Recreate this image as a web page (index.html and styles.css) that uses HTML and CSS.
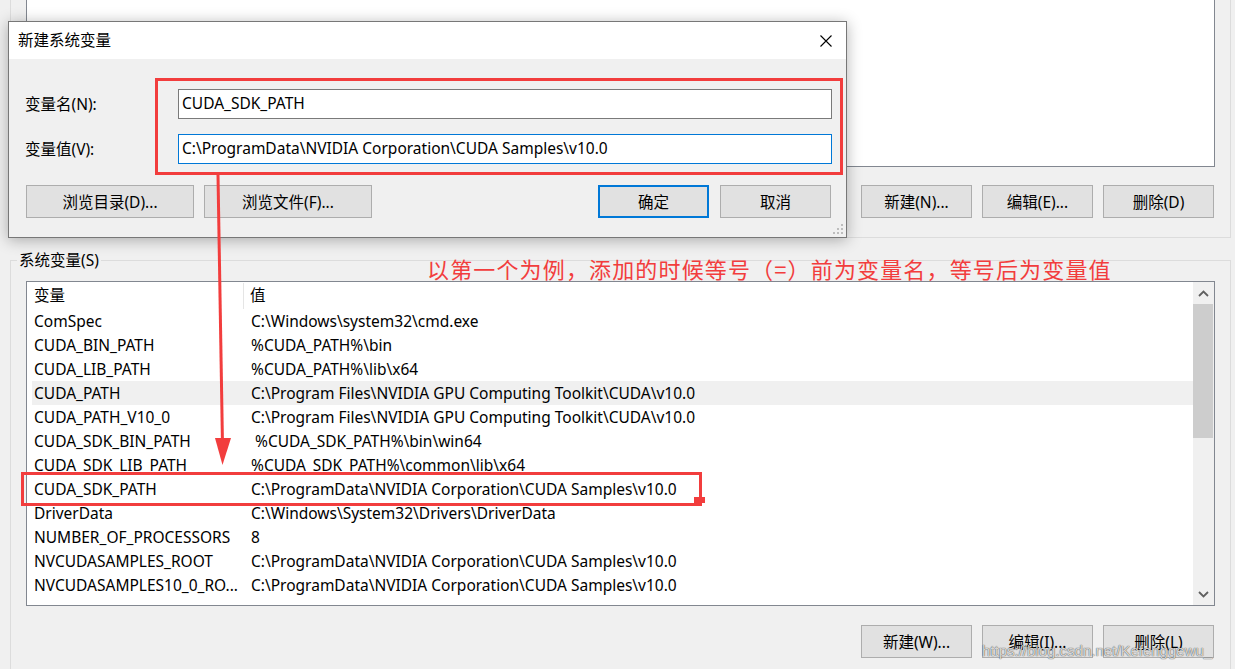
FILE: index.html
```html
<!DOCTYPE html>
<html lang="zh-CN">
<head>
<meta charset="utf-8">
<title>新建系统变量</title>
<link rel="stylesheet" href="styles.css">
</head>
<body>
<div class="screen">
  <section class="group group-user">
    <div class="list list-user"></div>
    <div class="btn-row">
      <button class="btn">新建(N)...</button>
      <button class="btn">编辑(E)...</button>
      <button class="btn">删除(D)</button>
    </div>
  </section>

  <section class="group group-sys">
    <div class="group-title">系统变量(S)</div>
    <div class="list list-sys">
      <div class="list-body">
        <div class="list-head">
          <span class="head-name">变量</span>
          <span class="head-val">值</span>
        </div>
        <div class="row"><span class="col-name">ComSpec</span><span class="col-val">C:\Windows\system32\cmd.exe</span></div>
        <div class="row"><span class="col-name">CUDA_BIN_PATH</span><span class="col-val">%CUDA_PATH%\bin</span></div>
        <div class="row"><span class="col-name">CUDA_LIB_PATH</span><span class="col-val">%CUDA_PATH%\lib\x64</span></div>
        <div class="row row-hover"><span class="col-name">CUDA_PATH</span><span class="col-val">C:\Program Files\NVIDIA GPU Computing Toolkit\CUDA\v10.0</span></div>
        <div class="row"><span class="col-name">CUDA_PATH_V10_0</span><span class="col-val">C:\Program Files\NVIDIA GPU Computing Toolkit\CUDA\v10.0</span></div>
        <div class="row"><span class="col-name">CUDA_SDK_BIN_PATH</span><span class="col-val col-indent">%CUDA_SDK_PATH%\bin\win64</span></div>
        <div class="row"><span class="col-name">CUDA_SDK_LIB_PATH</span><span class="col-val">%CUDA_SDK_PATH%\common\lib\x64</span></div>
        <div class="row"><span class="col-name">CUDA_SDK_PATH</span><span class="col-val">C:\ProgramData\NVIDIA Corporation\CUDA Samples\v10.0</span></div>
        <div class="row"><span class="col-name">DriverData</span><span class="col-val">C:\Windows\System32\Drivers\DriverData</span></div>
        <div class="row"><span class="col-name">NUMBER_OF_PROCESSORS</span><span class="col-val">8</span></div>
        <div class="row"><span class="col-name">NVCUDASAMPLES_ROOT</span><span class="col-val">C:\ProgramData\NVIDIA Corporation\CUDA Samples\v10.0</span></div>
        <div class="row"><span class="col-name">NVCUDASAMPLES10_0_RO...</span><span class="col-val">C:\ProgramData\NVIDIA Corporation\CUDA Samples\v10.0</span></div>
      </div>
      <div class="scrollbar">
        <div class="sb-arrow">
          <svg width="11" height="7" viewBox="0 0 11 7"><path d="M1 6 L5.5 1.5 L10 6" fill="none" stroke="#606060" stroke-width="1.8"/></svg>
        </div>
        <div class="sb-track"><div class="sb-thumb"></div></div>
        <div class="sb-arrow">
          <svg width="11" height="7" viewBox="0 0 11 7"><path d="M1 1 L5.5 5.5 L10 1" fill="none" stroke="#606060" stroke-width="1.8"/></svg>
        </div>
      </div>
    </div>
    <div class="btn-row">
      <button class="btn">新建(W)...</button>
      <button class="btn">编辑(I)...</button>
      <button class="btn">删除(L)</button>
    </div>
  </section>

  <div class="dialog">
    <div class="title-bar">
      <span class="title">新建系统变量</span>
      <span class="close">
        <svg width="12" height="12" viewBox="0 0 12 12"><path d="M0.5 0.5 L11.5 11.5 M11.5 0.5 L0.5 11.5" stroke="#000" stroke-width="1.1" fill="none"/></svg>
      </span>
    </div>
    <div class="dialog-body">
      <div class="form">
        <label class="label">变量名(N):</label>
        <div class="input">CUDA_SDK_PATH</div>
        <label class="label">变量值(V):</label>
        <div class="input input-focus">C:\ProgramData\NVIDIA Corporation\CUDA Samples\v10.0</div>
      </div>
      <div class="dlg-buttons">
        <div class="dlg-left">
          <button class="btn btn-wide">浏览目录(D)...</button>
          <button class="btn btn-wide">浏览文件(F)...</button>
        </div>
        <div class="dlg-right">
          <button class="btn btn-default">确定</button>
          <button class="btn">取消</button>
        </div>
      </div>
    </div>
    <svg class="grip" width="12" height="12" viewBox="0 0 12 12">
      <rect x="9" y="1" width="2" height="2" fill="#bdbdbd"/>
      <rect x="5" y="5" width="2" height="2" fill="#bdbdbd"/>
      <rect x="9" y="5" width="2" height="2" fill="#bdbdbd"/>
      <rect x="1" y="9" width="2" height="2" fill="#bdbdbd"/>
      <rect x="5" y="9" width="2" height="2" fill="#bdbdbd"/>
      <rect x="9" y="9" width="2" height="2" fill="#bdbdbd"/>
    </svg>
  </div>

  <div class="mark mark-inputs"></div>
  <div class="mark mark-row"></div>
  <div class="mark-tab"></div>
  <svg class="arrow" width="1235" height="669" viewBox="0 0 1235 669">
    <line x1="218" y1="175" x2="222.5" y2="445" stroke="#f23d3d" stroke-width="3"/>
    <polygon points="215,438 231,438 222.5,465" fill="#f23d3d"/>
  </svg>
  <p class="note">以第一个为例，添加的时候等号（=）前为变量名，等号后为变量值</p>
  <div class="watermark">https://blog.csdn.net/Kefenggewu_</div>
</div>
</body>
</html>
```

FILE: styles.css
```css
* { box-sizing: border-box; }

body {
  margin: 0;
  background: #f0f0f0;
  font-family: "Noto Sans", "Noto Sans CJK SC", sans-serif;
  font-size: 15.5px;
  color: #000;
  overflow: hidden;
}

.screen {
  position: relative;
  width: 1235px;
  height: 669px;
  overflow: hidden;
}

/* ---------- group boxes ---------- */
.group {
  margin: 0 4px 0 10px;
  border: 1px solid #dcdcdc;
  padding: 0 15px;
}

.group-user {
  border-top: 0;
  height: 238px;
}

.group-sys {
  margin-top: 22px;
  border-bottom: 0;
  height: 420px;
}

.group-title {
  width: fit-content;
  margin: -11px 0 0 -9px;
  padding: 0 2px;
  line-height: 20px;
  background: #f0f0f0;
}

.list {
  background: #fff;
  border: 1px solid #828790;
}

.list-user {
  height: 167px;
  border-top: 0;
}

.list-sys {
  margin-top: 11px;
  height: 325px;
  display: flex;
}

.list-body {
  flex: 1;
  padding-left: 5px;
  overflow: hidden;
}

.list-head {
  display: flex;
  height: 27px;
  padding-top: 1px;
}

.head-name {
  width: 212px;
  padding-left: 2px;
  border-right: 1px solid #e5e5e5;
  line-height: 25px;
}

.head-val {
  padding-left: 6px;
  line-height: 25px;
}

.row {
  display: flex;
  height: 24px;
  line-height: 24px;
  white-space: nowrap;
}

.row-hover { background: #f0f0f0; }

.col-name {
  width: 219px;
  padding-left: 2px;
  flex-shrink: 0;
}

.col-indent { padding-left: 4px; }

.scrollbar {
  width: 21px;
  background: #f0f0f0;
  display: flex;
  flex-direction: column;
}

.sb-arrow {
  height: 22px;
  display: flex;
  align-items: center;
  justify-content: center;
}

.sb-track {
  flex: 1;
  padding-right: 1px;
}

.sb-thumb {
  height: 134px;
  background: #cdcdcd;
}

/* ---------- buttons ---------- */
.btn-row {
  display: flex;
  justify-content: flex-end;
  gap: 10px;
  padding-right: 1px;
}

.group-user .btn-row { margin-top: 18px; }
.group-sys .btn-row { margin-top: 19px; }

.btn {
  width: 111px;
  height: 33px;
  margin: 0;
  padding: 0;
  background: #e1e1e1;
  border: 1px solid #adadad;
  font: inherit;
  color: #000;
  text-align: center;
  line-height: 30px;
}

.btn-wide { width: 168px; }

.btn-default { border: 2px solid #0078d7; }

/* ---------- dialog ---------- */
.dialog {
  position: absolute;
  left: 8px;
  top: 21px;
  width: 839px;
  height: 217px;
  border: 1px solid #777;
  background: #f0f0f0;
  box-shadow: 0 2px 14px rgba(0, 0, 0, 0.3);
}

.title-bar {
  height: 37px;
  background: #fff;
  display: flex;
  justify-content: space-between;
  align-items: center;
  padding-left: 9px;
}

.title { line-height: 37px; }

.close {
  width: 40px;
  height: 37px;
  display: flex;
  align-items: center;
  justify-content: center;
}

.dialog-body {
  padding: 30px 14px 0 16px;
}

.form {
  display: grid;
  grid-template-columns: 153px 1fr;
  row-gap: 15px;
  align-items: center;
}

.label { line-height: 28px; }

.input {
  height: 30px;
  background: #fff;
  border: 1px solid #7a7a7a;
  padding-left: 3px;
  line-height: 26px;
  white-space: nowrap;
}

.input-focus { border-color: #0078d7; }

.dlg-buttons {
  margin-top: 21px;
  display: flex;
  justify-content: space-between;
}

.dlg-left {
  display: flex;
  gap: 10px;
  margin-left: 1px;
}

.dlg-right {
  display: flex;
  gap: 11px;
  margin-right: 1px;
}

.grip {
  position: absolute;
  right: 2px;
  bottom: 2px;
}

/* ---------- annotations ---------- */
.mark {
  position: absolute;
  border: 3px solid #f23d3d;
}

.mark-inputs {
  left: 155px;
  top: 78px;
  width: 688px;
  height: 97px;
}

.mark-row {
  left: 21px;
  top: 472px;
  width: 681px;
  height: 34px;
}

.mark-tab {
  position: absolute;
  left: 694px;
  top: 497px;
  width: 11px;
  height: 6px;
  background: #f23d3d;
}

.arrow {
  position: absolute;
  left: 0;
  top: 0;
  pointer-events: none;
}

.note {
  position: absolute;
  left: 427px;
  top: 255px;
  margin: 0;
  font-family: "Noto Sans CJK SC", sans-serif;
  font-size: 22px;
  letter-spacing: 1.15px;
  line-height: 26px;
  color: #f23d3d;
  white-space: nowrap;
}

.watermark {
  position: absolute;
  left: 982px;
  top: 642px;
  font-family: "Liberation Sans", sans-serif;
  font-size: 15px;
  line-height: 18px;
  color: rgba(255, 255, 255, 0.8);
  text-shadow: 0 0 1px rgba(0, 0, 0, 0.7), 0 0 1px rgba(0, 0, 0, 0.4);
  white-space: nowrap;
}
```
